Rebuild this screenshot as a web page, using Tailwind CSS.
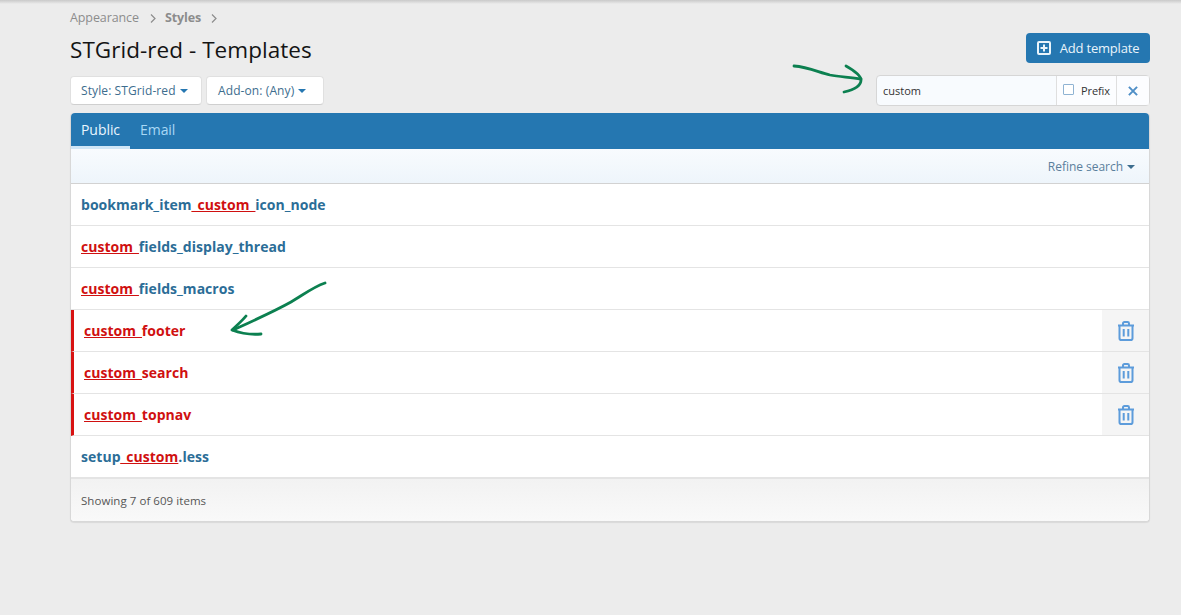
<!DOCTYPE html>
<html lang="en">
<head>
    <meta charset="UTF-8">
    <title>STGrid-red - Templates</title>
    <script src="https://cdn.jsdelivr.net/npm/@tailwindcss/browser@4"></script>
</head>
<body class="bg-[#ececec] h-[615px] overflow-hidden font-['Open_Sans','Noto_Sans',sans-serif] text-[#141414] relative">
    <div class="h-[4px] bg-gradient-to-b from-[#c9c9c9] to-[#ececec]"></div>

    <main class="w-[1080px] ml-[70px]">
        <!-- Breadcrumb -->
        <div class="flex items-center h-[28px] text-[12.5px] text-[#8c8c8c] tracking-[-0.1px]">
            <span>Appearance</span>
            <svg class="w-[6px] h-[9px] ml-[11px] mr-[9px]" viewBox="0 0 6 9" fill="none" stroke="#8c8c8c" stroke-width="1.2"><path d="M1 .5l4 4-4 4"/></svg>
            <span class="font-bold">Styles</span>
            <svg class="w-[6px] h-[9px] ml-[10px]" viewBox="0 0 6 9" fill="none" stroke="#8c8c8c" stroke-width="1.2"><path d="M1 .5l4 4-4 4"/></svg>
        </div>

        <!-- Title row -->
        <div class="flex justify-between items-start h-[44px]">
            <h1 class="text-[22.5px] leading-[36px] tracking-[0.05px]">STGrid-red - Templates</h1>
            <button class="mt-[1px] h-[30px] w-[124px] bg-[#2577b1] rounded-[4px] text-[#e9f4fb] text-[13px] tracking-[-0.2px] flex items-center justify-center gap-[9px]">
                <svg class="w-[14px] h-[14px]" viewBox="0 0 14 14" fill="none" stroke="currentColor" stroke-width="2"><rect x="1" y="1" width="12" height="12" rx="1"/><path d="M7 3.5v7M3.5 7h7"/></svg>
                <span class="pt-[1px]">Add template</span>
            </button>
        </div>

        <!-- Filter row -->
        <div class="flex justify-between items-center h-[29px] mb-[8px]">
            <div class="flex gap-[4px] text-[12px] text-[#3d6d8e] tracking-[0.1px]">
                <div class="h-[29px] w-[132px] bg-white rounded-[4px] border border-[#e0e0e0] border-b-[#cfcfcf] flex items-center pl-[10px] gap-[4px] pt-[1px]">
                    <span>Style: STGrid-red</span><i class="w-0 h-0 border-x-[4px] border-x-transparent border-t-[4px] border-t-[#2577b1]"></i>
                </div>
                <div class="h-[29px] w-[118px] bg-white rounded-[4px] border border-[#e0e0e0] border-b-[#cfcfcf] flex items-center pl-[11px] gap-[4px] pt-[1px]">
                    <span>Add-on: (Any)</span><i class="w-0 h-0 border-x-[4px] border-x-transparent border-t-[4px] border-t-[#2577b1]"></i>
                </div>
            </div>
            <div class="w-[274px] h-[31px] flex bg-[#f8fbfe] border border-[#d6d6d6] rounded-[4px] text-[11px] text-[#333] items-stretch">
                <div class="w-[179px] flex items-center pl-[6px] pt-[1px]">custom</div>
                <div class="w-[60px] flex items-center border-l border-[#dfdfdf] pl-[6px] gap-[7px] bg-white/60">
                    <i class="w-[11px] h-[11px] border-[1.5px] border-[#8fb3d3] rounded-[1px] bg-white mb-[2px]"></i><span class="tracking-[-0.1px] pt-[1px]">Prefix</span>
                </div>
                <div class="flex-1 flex items-center justify-center border-l border-[#dfdfdf] bg-white/60">
                    <svg class="w-[10px] h-[10px]" viewBox="0 0 11 11" stroke="#4f8fc7" stroke-width="2.2"><path d="M1 1l9 9M10 1l-9 9"/></svg>
                </div>
            </div>
        </div>

        <!-- Panel -->
        <section class="rounded-[4px] bg-white border-x border-b border-[#d8d8d8] shadow-[0_1px_1px_rgba(0,0,0,0.08)]">
            <div class="h-[36px] bg-[#2577b1] rounded-t-[4px] flex text-[14px] tracking-[-0.05px]">
                <div class="w-[59px] text-center leading-[33px] text-[#e9f6ff] border-b-[3px] border-[#cfe6f7]">Public</div>
                <div class="ml-[2px] pl-[8px] leading-[33px] text-[#a9d8f5]">Email</div>
            </div>
            <div class="h-[35px] bg-gradient-to-b from-[#f8fbfe] to-[#eef5fb] border-b border-[#d2d2d2] flex items-center justify-end pr-[14px] gap-[4px] text-[12px] text-[#5a7f9c] tracking-[-0.03px] pt-[1px]">
                <span>Refine search</span><i class="w-0 h-0 border-x-[4px] border-x-transparent border-t-[4px] border-t-[#3d6d8e]"></i>
            </div>

            <!-- Rows -->
            <div class="h-[42px] border-b border-[#e4e4e4] flex items-center pl-[10px] text-[14px] font-bold text-[#2b6d97] tracking-[0.03px]">
                <span>bookmark_item<u class="text-[#d01010] decoration-[#d01010]">_custom_</u>icon_node</span>
            </div>
            <div class="h-[42px] border-b border-[#e4e4e4] flex items-center pl-[10px] text-[14px] font-bold text-[#2b6d97] tracking-[0.03px]">
                <span><u class="text-[#d01010] decoration-[#d01010]">custom_</u>fields_display_thread</span>
            </div>
            <div class="h-[42px] border-b border-[#e4e4e4] flex items-center pl-[10px] text-[14px] font-bold text-[#2b6d97] tracking-[0.03px]">
                <span><u class="text-[#d01010] decoration-[#d01010]">custom_</u>fields_macros</span>
            </div>
            <div class="h-[42px] border-b border-[#e4e4e4] border-l-[3px] border-l-[#d81212] flex items-center pl-[10px] text-[14px] font-bold text-[#d01010] tracking-[0.03px]">
                <span><u>custom_</u>footer</span>
                <div class="ml-auto w-[47px] h-full bg-[#f5f5f5] flex items-center justify-center">
                    <svg class="w-[18px] h-[20px]" viewBox="0 0 18 20" fill="none" stroke="#5d9cdb" stroke-width="2"><path d="M1 4.5h16M6 4.5V2.4C6 1.6 6.6 1 7.4 1h3.2c.8 0 1.4.6 1.4 1.4v2.1M2.5 4.5v12.7c0 1 .8 1.8 1.8 1.8h9.4c1 0 1.8-.8 1.8-1.8V4.5M6.7 8v7.5M11.3 8v7.5"/></svg>
                </div>
            </div>
            <div class="h-[42px] border-b border-[#e4e4e4] border-l-[3px] border-l-[#d81212] flex items-center pl-[10px] text-[14px] font-bold text-[#d01010] tracking-[0.03px]">
                <span><u>custom_</u>search</span>
                <div class="ml-auto w-[47px] h-full bg-[#f5f5f5] flex items-center justify-center">
                    <svg class="w-[18px] h-[20px]" viewBox="0 0 18 20" fill="none" stroke="#5d9cdb" stroke-width="2"><path d="M1 4.5h16M6 4.5V2.4C6 1.6 6.6 1 7.4 1h3.2c.8 0 1.4.6 1.4 1.4v2.1M2.5 4.5v12.7c0 1 .8 1.8 1.8 1.8h9.4c1 0 1.8-.8 1.8-1.8V4.5M6.7 8v7.5M11.3 8v7.5"/></svg>
                </div>
            </div>
            <div class="h-[42px] border-b border-[#e4e4e4] border-l-[3px] border-l-[#d81212] flex items-center pl-[10px] text-[14px] font-bold text-[#d01010] tracking-[0.03px]">
                <span><u>custom_</u>topnav</span>
                <div class="ml-auto w-[47px] h-full bg-[#f5f5f5] flex items-center justify-center">
                    <svg class="w-[18px] h-[20px]" viewBox="0 0 18 20" fill="none" stroke="#5d9cdb" stroke-width="2"><path d="M1 4.5h16M6 4.5V2.4C6 1.6 6.6 1 7.4 1h3.2c.8 0 1.4.6 1.4 1.4v2.1M2.5 4.5v12.7c0 1 .8 1.8 1.8 1.8h9.4c1 0 1.8-.8 1.8-1.8V4.5M6.7 8v7.5M11.3 8v7.5"/></svg>
                </div>
            </div>
            <div class="h-[41px] flex items-center pl-[10px] text-[14px] font-bold text-[#2b6d97] tracking-[0.03px]">
                <span>setup<u class="text-[#d01010] decoration-[#d01010]">_custom</u>.less</span>
            </div>

            <!-- Footer -->
            <div class="h-[44px] bg-gradient-to-b from-[#f2f2f2] to-[#f9f9f9] border-t-2 border-[#e4e4e4] rounded-b-[4px] flex items-center pl-[10px] text-[11.5px] text-[#555] tracking-[0.05px] pt-[1px]">
                Showing 7 of 609 items
            </div>
        </section>
    </main>

    <!-- Green annotation arrows drawn over the page -->
    <svg class="absolute left-0 top-0 w-[1181px] h-[615px] pointer-events-none" viewBox="0 0 1181 615" fill="none" stroke="#0c8050" stroke-width="2.8" stroke-linecap="round" stroke-linejoin="round">
        <path d="M794 66c14 1 24 6 36 9 10 2 20 2 31 4"/>
        <path d="M846 66c7 4 15 9 15 14 0 6-8 10-17 12"/>
        <path d="M325 283c-12 4-22 12-34 19-18 10-36 18-58 28"/>
        <path d="M246 316c-4 5-10 10-14 14 8 3 18 5 29 4"/>
    </svg>
</body>
</html>
